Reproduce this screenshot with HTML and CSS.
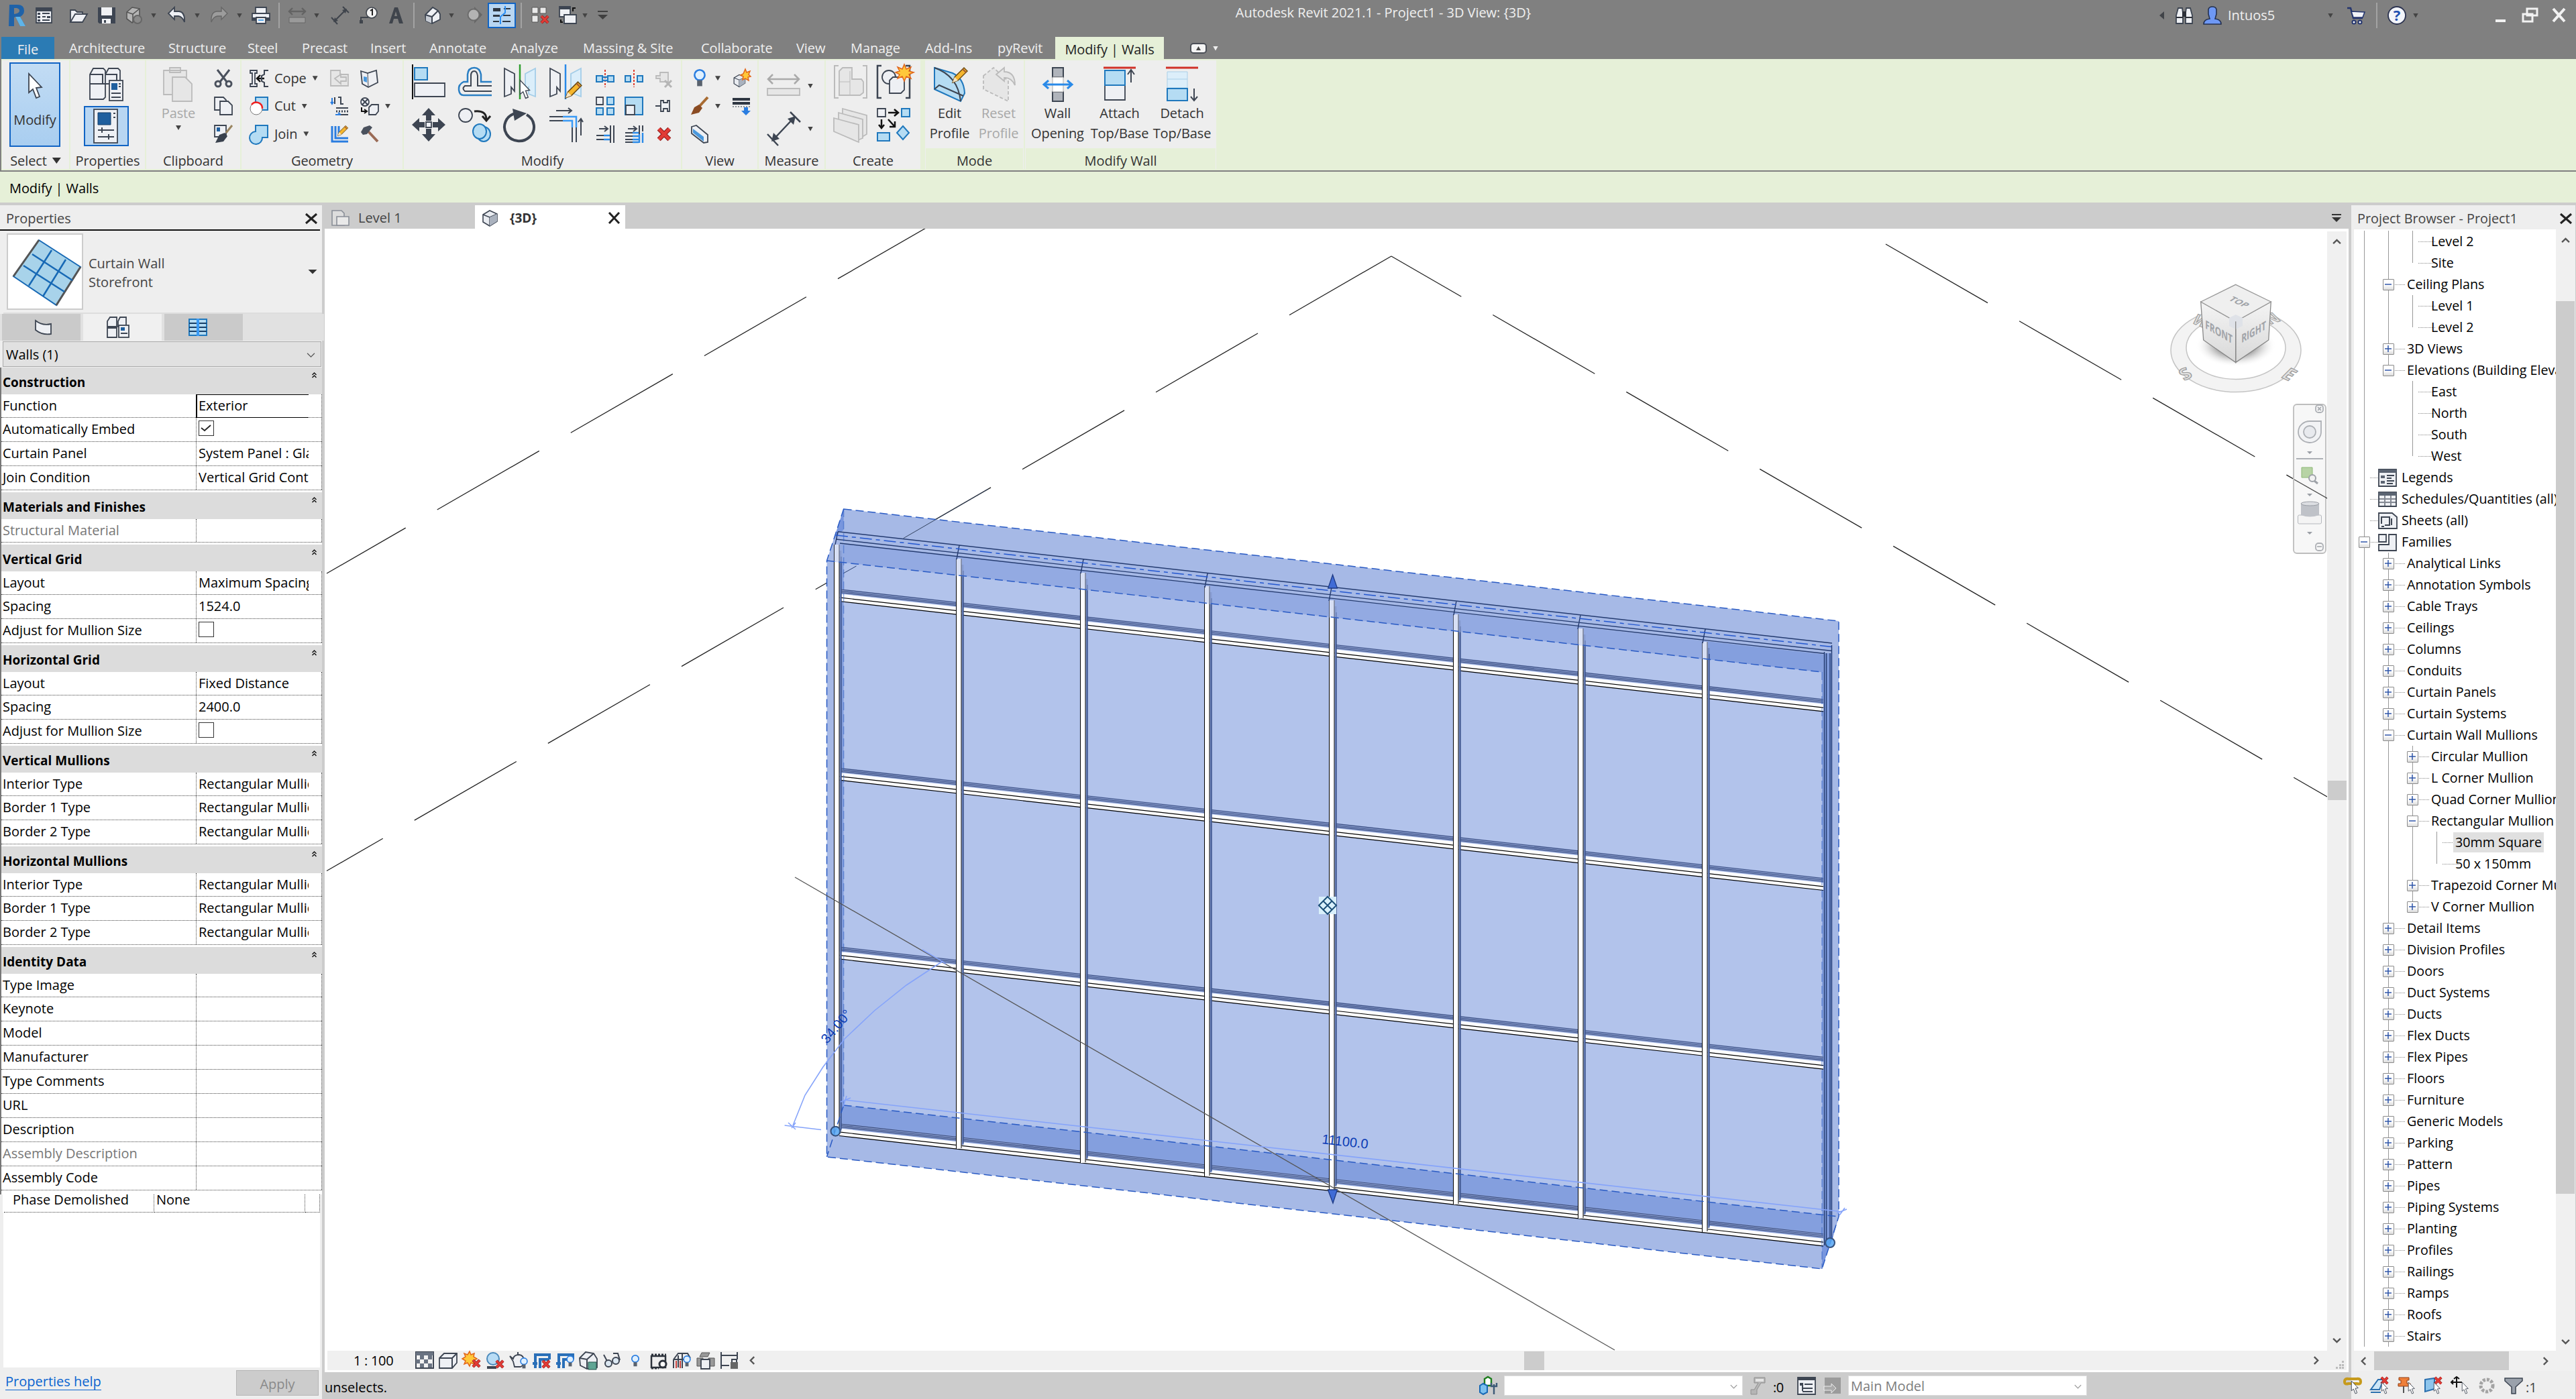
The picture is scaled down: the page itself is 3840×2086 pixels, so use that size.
FILE: index.html
```html
<!DOCTYPE html>
<html lang="en">
<head>
  <meta charset="UTF-8" />
  <title>Autodesk Revit 2021.1 - Project1 - 3D View: {3D}</title>
  <link rel="stylesheet" href="styles.css">
</head>
<body>

<svg class="defs">
  <symbol id="redx" viewBox="0 0 14 14"><path d="M2 2L12 12M12 2L2 12" stroke="#8f1c1c" stroke-width="4.4"/><path d="M2 2L12 12M12 2L2 12" stroke="#e23b35" stroke-width="3"/></symbol>
  <symbol id="cursor" viewBox="0 0 24 40"><path d="M3 2L3 30L9 25L14 38L19 36L14 23L22 22Z" fill="#fff" stroke="#3d4552" stroke-width="1.8"/></symbol>
  <symbol id="pencil" viewBox="0 0 26 26"><path d="M2 24L5 16L19 2L24 7L10 21Z" fill="#f5b62e" stroke="#6b4a12" stroke-width="1.4"/><path d="M2 24L5 16L10 21Z" fill="#f5e3c3"/><path d="M17 4L22 9" stroke="#a65b32" stroke-width="2"/></symbol>
  <symbol id="bulb" viewBox="0 0 14 22"><circle cx="7" cy="7" r="6" fill="#dff0ff" stroke="#2a7de0" stroke-width="2"/><path d="M4 13H10V20H4Z" fill="#59626e"/></symbol>
  <symbol id="cube" viewBox="0 0 28 28"><path d="M4 9L14 3L25 8V19L14 26L4 20Z" fill="#e9ecf1" stroke="#3d4552" stroke-width="1.6"/><path d="M4 9L14 13L25 8M14 13V26" fill="none" stroke="#3d4552" stroke-width="1.4"/><path d="M14 13L25 8V19L14 26Z" fill="#aab2be"/></symbol>
</svg>

<header class="titlebar">
  <div class="qat">
    <svg class="i logo"><path d="M3 1H15Q25 1 25 10Q25 16 19 19L27 33H19L12 19L10 20V33H2Z" fill="#1f62a8"/><path d="M10 6H14Q18 7 18 10Q18 14 10 15Z" fill="#808080"/><path d="M12 19L19 33H27L19 19Z" fill="#5fb4e8"/></svg>
    <svg class="i"><path class="l" d="M3 3H26V25H3Z"/><path d="M3 3H26V8H3ZM5 10H9V13H5ZM5 15H9V18H5ZM5 20H9V23H5ZM19 15H24V18H19Z" fill="#3d4552"/><path class="d" d="M12 11H23M12 16H17M12 21H23"/></svg>
    <svg class="i"><path class="l" d="M2 24V6H9L12 9H20V13"/><path class="l" d="M2 24L9 12H27L20 24Z"/></svg>
    <svg class="i"><path d="M1 2H27V26H3L1 24Z" fill="#3d4552"/><path d="M6 2H22V14H6ZM7 19H20V26H7Z" fill="#f0f1f4"/><path d="M10 21H13V25H10Z" fill="#3d4552"/></svg>
    <svg class="i"><path d="M3 9L11 2L22 4V15L11 25L3 19Z" fill="#b5b5b5" stroke="#555" stroke-width="1.6"/><path d="M3 9L12 12L22 4M12 12V24" fill="none" stroke="#555" stroke-width="1.6"/><circle cx="19" cy="20" r="6" fill="#8a8a8a" stroke="#666" stroke-width="2"/></svg>
    <i class="tri"></i>
    <svg class="i"><path class="l" d="M2 11L11 2V8H18Q27 9 26 24Q23 16 17 15H11V20Z"/></svg>
    <i class="tri"></i>
    <svg class="i"><path d="M26 11L17 2V8H10Q1 9 2 24Q5 16 11 15H17V20Z" fill="#9c9c9c" stroke="#666" stroke-width="1.4"/></svg>
    <i class="tri"></i>
    <svg class="i"><path class="l" d="M6 2H22V11H6Z"/><path class="l" d="M1 11H27V21H1Z"/><path d="M1 17H27V21H1Z" fill="#3d4552"/><path class="l" d="M7 17H21V26H7Z"/><path d="M10 20H18V22H10Z" fill="#58a9ea"/></svg>
    <i class="vsep"></i>
    <svg class="i"><path d="M1 8H27M7 3L2 8L7 13M21 3L26 8L21 13" fill="none" stroke="#636363" stroke-width="2.4"/><path d="M2 17H26V25H2Z" fill="#9a9a9a" stroke="#666"/></svg>
    <i class="tri"></i>
    <svg class="i"><path d="M5 23L23 5M1 17L10 27M18 1L27 10" stroke="#3f444c" stroke-width="2"/><path d="M4 24L6 17L11 22ZM24 4L17 6L22 11Z" fill="#3f444c"/></svg>
    <svg class="i"><path d="M3 25V17H14" fill="none" stroke="#3f444c" stroke-width="2"/><path d="M1 21H6V26H1Z" fill="#3f444c"/><circle cx="19" cy="10" r="8" fill="#f4f4f4" stroke="#3f444c" stroke-width="1.6"/><path d="M17 7L20 5V14" fill="none" stroke="#222" stroke-width="2"/></svg>
    <svg class="i"><path d="M4 26L12 2H17L25 26H19L17 19H11L9 26ZM12 15H16L14 8Z" fill="#3f444c"/></svg>
    <i class="vsep"></i>
    <svg class="i"><path class="l" d="M3 13L14 2L22 7L25 12V20L13 26L4 22Z"/><path d="M4 13L13 17V26L4 22Z" fill="#c7ccd4"/><path class="d" d="M3 13L13 16L22 7M13 16V26"/></svg>
    <i class="tri"></i>
    <svg class="i"><path d="M14 1L26 13L14 26Z" fill="#666"/><circle cx="13" cy="13" r="8.5" fill="#b3b3b3" stroke="#6c6c6c" stroke-width="2"/></svg>
    <span class="active-tool"><svg class="i"><path d="M1 3H12V8H1ZM1 13H11V16H1ZM1 22H10V24H1Z" fill="#2f3742"/><path d="M17 4H27M16 14H27M15 23H27" stroke="#2f3742" stroke-width="2"/><path d="M19 0V10L12 16V27" fill="none" stroke="#2b8ff5" stroke-width="2"/></svg></span>
    <i class="vsep"></i>
    <svg class="i"><path d="M2 2H11V11H2ZM14 2H23V11H14ZM2 14H11V24H2Z" fill="#e8e8e8" stroke="#555"/><use href="#redx" x="14" y="13" width="14" height="14"/></svg>
    <svg class="i"><path class="l" d="M2 1H18V16H2Z"/><path d="M2 1H18V5H2Z" fill="#3d4552"/><path class="l" d="M9 13H27V26H9Z"/><path d="M22 8V3H26M4 20V24H7" fill="none" stroke="#111" stroke-width="2"/></svg>
    <i class="tri"></i>
    <svg class="i"><path d="M3 8H18" stroke="#3f3f3f" stroke-width="2"/><path d="M3 13H18L10.500 20Z" fill="#3f3f3f"/></svg>
  </div>
  <div class="title">Autodesk Revit 2021.1 - Project1 - 3D View: {3D}</div>
  <div class="account">
    <svg class="i"><path d="M7 8V20L0 14Z" fill="#404348"/></svg>
    <svg class="i"><path class="l" d="M5 3H11L12 10V26H2V14ZM17 3H23L26 14V26H16V10Z"/><path d="M11 8H17V16H11ZM2 16H12V18H2ZM16 16H26V18H16Z" fill="#2c3038"/></svg>
    <svg class="i"><path d="M1 27Q1 20 10 19L8 12V5Q9 1 14 1Q19 1 20 5V12L18 19Q27 20 27 27Z" fill="#6e98f5" stroke="#23304f" stroke-width="1.6"/></svg>
    <span>Intuos5</span>
    <i class="tri"></i>
    <svg class="i"><path d="M1 3H6L10 18H24" fill="none" stroke="#24356e" stroke-width="2.4"/><path d="M7 8L27 9L24 17H10Z" fill="#f2f3f8" stroke="#24356e" stroke-width="1.6"/><circle cx="11" cy="24" r="2.500" fill="#fff" stroke="#24356e" stroke-width="2"/><circle cx="20" cy="24" r="2.500" fill="#fff" stroke="#24356e" stroke-width="2"/></svg>
    <i class="vsep"></i>
    <svg class="i"><circle cx="14" cy="14" r="13" fill="#f3f5fa" stroke="#2c3350" stroke-width="1.8"/><text x="14" y="22" class="qmark">?</text></svg>
    <i class="tri"></i>
    <svg class="i"><path d="M2 20H17V24H2Z" fill="#f2f2f2"/></svg>
    <svg class="i"><path d="M9 4H24V14H9ZM3 12H17V23H3Z" fill="#808080" stroke="#f2f2f2" stroke-width="3"/></svg>
    <svg class="i"><path d="M3 4L20 23M20 4L3 23" stroke="#f2f2f2" stroke-width="4"/></svg>
  </div>
</header>

<nav class="tabs">
  <a class="file">File</a><a>Architecture</a><a>Structure</a><a>Steel</a><a>Precast</a><a>Insert</a><a>Annotate</a><a>Analyze</a><a>Massing &amp; Site</a><a>Collaborate</a><a>View</a><a>Manage</a><a>Add-Ins</a><a>pyRevit</a><a class="current">Modify | Walls</a>
  <svg class="i toggle"><rect x="1" y="7" width="23" height="14" rx="4" fill="#f4f4f4" stroke="#4b4f57" stroke-width="2"/><path d="M12.500 11L16 17H9Z" fill="#444"/></svg>
  <i class="tri light"></i>
</nav>

<section class="ribbon">
  <div class="group g-select">
    <div class="body"><div class="bigbtn on"><svg class="cur"><use href="#cursor"/></svg>Modify</div></div>
    <div class="label">Select <i class="tri big"></i></div>
  </div>

  <div class="group g-props">
    <div class="body">
      <svg class="n"><path class="l" d="M2 12L7 3H22L25 6V26H2ZM25 12L30 3H44L47 6V26H25ZM2 26H25V46L22 49H2Z"/><path class="d" d="M2 12H21V26M25 12H42V26"/><rect class="l" x="31" y="21" width="20" height="30"/><path d="M34 25H43V35H34Z" fill="#1f5f9e"/><path class="d" d="M45 26H48M45 30H48M34 40H48M34 46H48"/></svg>
      <span class="active-tool wide"><svg class="n"><rect class="l" x="8" y="1" width="35" height="50"/><path d="M14 6H33V24H14Z" fill="#1f5f9e" stroke="#173f68"/><path class="d" d="M37 7H40M37 13H40M14 32H38M20 28V36M14 42H38M30 38V46"/></svg></span>
    </div>
    <div class="label">Properties</div>
  </div>

  <div class="group g-clip">
    <div class="body">
      <div class="bigbtn off"><svg class="n"><path class="gy" d="M4 6H38V42H4ZM13 2H29V9H13Z"/><path class="gy" d="M17 16H36L46 26V52H17Z"/></svg>Paste<i class="tri"></i></div>
      <div class="smalls">
        <svg class="i"><path d="M5 1L19 19M23 1L9 19" stroke="#4a515d" stroke-width="3"/><circle class="d2" cx="6" cy="22" r="4"/><circle class="d2" cx="22" cy="22" r="4"/></svg>
        <svg class="i"><path class="l" d="M1 1H14L18 5V20H1Z"/><path class="l" d="M9 7H21L27 13V27H9Z"/></svg>
        <svg class="i"><path class="l" d="M1 1H18V18H1Z"/><path d="M4 4H9V10H4Z" fill="#1f5f9e"/><path d="M27 1L18 12" stroke="#9a8560" stroke-width="3"/><path d="M2 27L8 15L16 12L20 17L14 25Z" fill="#39414d"/></svg>
      </div>
    </div>
    <div class="label">Clipboard</div>
  </div>

  <div class="group g-geo">
    <div class="body">
      <div class="smalls texts">
        <div><svg class="i"><path class="l" d="M1 2H11V6H8V22H11V26H1V22H4V6H1Z"/><path d="M12 14H22M16 9L11 14L16 19" fill="none" stroke="#111" stroke-width="2.400"/><path class="d" d="M28 2H22V8L18 10V18L22 20V26H28"/></svg>Cope<i class="tri"></i></div>
        <div><svg class="i"><path class="b" d="M9 1H27V20H9Z"/><circle cx="10" cy="18" r="9" fill="#fff" stroke="#777"/><path d="M3 12A9 9 0 0 1 19 18" fill="none" stroke="#f02020" stroke-width="2.400"/></svg>Cut<i class="tri"></i></div>
        <div><svg class="i"><path class="b" d="M9 1H27V19H19A9.500 9.500 0 1 1 9 10Z"/></svg>Join<i class="tri"></i></div>
      </div>
      <div class="smalls">
        <svg class="i"><path class="gy" d="M1 2H15V8H27V25H1Z"/><path class="gy" d="M7 14L16 8V12H24V18H16V22Z"/></svg>
        <svg class="i"><path class="d" d="M7 1V11M12 1H16V11H20M9 17H27M9 27H27"/><path d="M9 22H27" stroke="#3d4552" stroke-width="3" stroke-dasharray="2"/><path d="M3 2V10M1 8L3 11L5 8M8 27H15M12 24L16 27" fill="none" stroke="#2a7de0" stroke-width="2"/></svg>
        <svg class="i"><path d="M3 2V25H27M8 2V20H27M13 2V15" fill="none" stroke="#2a7de0" stroke-width="3"/><use href="#pencil" x="10" y="0" width="18" height="18"/></svg>
      </div>
      <div class="smalls">
        <svg class="i"><path class="l" d="M1 3L11 6L24 2L26 20L12 27L3 22Z"/><path d="M11 6L12 27" stroke="#3d4552"/><path d="M5 11L10 12V20L5 18Z" fill="#4a98dc"/></svg>
        <div><svg class="i"><circle class="l" cx="7" cy="8" r="6"/><path class="d" d="M3 4L11 12M11 4L3 12"/><path class="l" d="M13 16L17 12H27V22L23 27H13Z"/><path d="M2 16V22H9M6 19L10 22L6 25" fill="none" stroke="#111" stroke-width="2"/></svg><i class="tri"></i></div>
        <svg class="i"><path d="M11 9L26 25" stroke="#9a6a55" stroke-width="4"/><path d="M1 11L5 4L14 1L18 4L10 14L4 15Z" fill="#4a515d"/></svg>
      </div>
    </div>
    <div class="label">Geometry</div>
  </div>

  <div class="group g-modify">
    <div class="body">
      <div class="bigs">
        <svg class="n"><path d="M2 0V52" stroke="#111" stroke-width="2"/><path class="b" d="M5 5H24V23H5Z"/><path class="l" d="M5 28H50V48H5Z"/></svg>
        <svg class="n"><path class="b2" d="M52 26H36V15Q34 5 26 5Q17 5 16 15V26H10Q2 30 3 38Q4 46 10 46H52"/><path class="d" d="M52 32H31V17Q30 10 26 10Q21 10 21 17V32H12Q7 36 12 40H52"/></svg>
        <svg class="n"><path class="l" d="M3 6L18 14V40L13 34V44L3 48Z"/><path class="pb" d="M49 6L34 14V40L39 34V44L49 48Z"/><path d="M26 0V52" stroke="#2f9e2f" stroke-width="2.500"/><use href="#cursor" x="24" y="22" width="18" height="30"/></svg>
        <svg class="n"><path class="l" d="M3 6L18 14V40L13 34V44L3 48Z"/><path class="pb" d="M49 6L34 14V40L39 34V44L49 48Z"/><path d="M26 0V52" stroke="#2a8ae8" stroke-width="2.500"/><use href="#pencil" x="24" y="24" width="28" height="28"/></svg>
        <svg class="n"><path d="M26 1L36 12H30V20H22V12H16ZM26 51L36 40H30V32H22V40H16ZM1 26L12 16V22H20V30H12V36ZM51 26L40 16V22H32V30H40V36Z" fill="#3d4552"/><path class="l" d="M22 22H30V30H22Z"/></svg>
        <svg class="n"><circle class="l" cx="13" cy="12" r="10"/><path d="M26 6Q44 4 44 18M38 13L44 20L50 13" fill="none" stroke="#222" stroke-width="3"/><ellipse class="b" cx="40" cy="40" rx="10" ry="11"/><ellipse class="b" cx="34" cy="36" rx="10" ry="11"/></svg>
        <svg class="n"><path d="M36 11A22 21 0 1 1 19 9" fill="none" stroke="#3d4552" stroke-width="4"/><path d="M15 2L36 9L18 20Z" fill="#3d4552"/></svg>
        <svg class="n"><path class="d" d="M2 14H22M2 20H22M36 30V52M42 30V52M12 5H34M30 1L35 5L30 9M49 42V18M45 22L49 17L52 22"/><path d="M22 14H42V30M22 20H36V30" fill="none" stroke="#3a9af5" stroke-width="2.500"/></svg>
      </div>
      <div class="smalls three">
        <svg class="i"><path class="b" d="M1 10H10V19H1ZM18 10H27V19H18Z"/><path d="M14 1V27" stroke="#e03c2c" stroke-width="2" stroke-dasharray="3 2"/><path class="b2" d="M10 12H18M10 17H18"/></svg>
        <svg class="i"><path class="b" d="M1 10H9V19H1ZM19 10H27V19H19Z"/><path d="M14 1V27" stroke="#e03c2c" stroke-width="2" stroke-dasharray="3 2"/></svg>
        <svg class="i"><path class="gy" d="M2 10H8V5H20V19H8V14H2Z"/><path d="M15 17L25 27M25 17L15 27" stroke="#b5b5b5" stroke-width="3"/></svg>
        <svg class="i"><path class="l" d="M1 1H11V12H1Z"/><path class="b" d="M17 1H27V12H17ZM1 17H11V27H1ZM17 17H27V27H17Z"/></svg>
        <svg class="i"><path class="b" d="M1 1H27V27H1Z"/><path class="l" d="M2 13H15V27H2Z"/></svg>
        <svg class="i"><path class="l" d="M9 6H13V9H19V6H22V22H19V18H13V22H9Z"/><path class="d" d="M1 14H9"/></svg>
        <svg class="i"><path class="d" d="M5 6H17M13 2L18 6L13 10M22 1V27M27 1V27M1 16H12M1 22H12"/><path d="M12 16H21M12 22H21" stroke="#2a8ae8" stroke-width="2.400"/></svg>
        <svg class="i"><path class="d" d="M5 6H17M13 2L18 6L13 10M1 12H12M1 17H12M1 22H12M1 26H12M22 1V14M27 1V10"/><path d="M12 12H21M12 17H21M12 22H21M12 26H21M22 14V27M27 12V27" stroke="#2a8ae8" stroke-width="2.400"/></svg>
        <svg class="i"><use href="#redx" x="3" y="3" width="22" height="22"/></svg>
      </div>
    </div>
    <div class="label">Modify</div>
  </div>

  <div class="group g-view">
    <div class="body">
      <div class="smalls">
        <div><svg class="i"><use href="#bulb" x="5" y="0" width="18" height="28"/></svg><i class="tri"></i></div>
        <div><svg class="i"><path d="M26 1L14 14" stroke="#a86b32" stroke-width="4"/><path d="M1 27L6 16L13 12L18 17L13 24Z" fill="#8a4b22"/></svg><i class="tri"></i></div>
        <svg class="i"><path class="l" d="M2 3L9 1L26 15V26L20 27L2 13Z"/><path d="M4 6L20 18V25L4 12Z" fill="#4a98dc"/></svg>
      </div>
      <div class="smalls">
        <svg class="i"><use href="#cube" x="0" y="6" width="22" height="22"/><path class="star" d="M20 0L22 5L27 3L25 8L28 11L24 12L25 17L20 14L16 16L17 11L13 9L17 7Z"/></svg>
        <svg class="i"><path d="M1 4H27M1 10H27" stroke="#2f3742" stroke-width="4"/><path d="M1 15H27" stroke="#2f3742" stroke-dasharray="2"/><path d="M18 16H24V21H28L21 28L14 21H18Z" fill="#2a7de0"/></svg>
      </div>
    </div>
    <div class="label">View</div>
  </div>

  <div class="group g-measure">
    <div class="body">
      <svg class="n"><path d="M3 16H49M10 9L3 16L10 23M42 9L49 16L42 23" fill="none" stroke="#aaa" stroke-width="2.500"/><path class="gy" d="M2 30H50V40H2Z"/></svg><i class="tri"></i>
      <svg class="n"><path d="M10 43L42 9M2 34L18 51M36 1L51 16" fill="none" stroke="#3d4552" stroke-width="2.500"/><path d="M8 45L11 32L20 41ZM44 7L41 20L32 11Z" fill="#3d4552"/></svg><i class="tri"></i>
    </div>
    <div class="label">Measure</div>
  </div>

  <div class="group g-create">
    <div class="body">
      <svg class="n"><path d="M8 2H2V50H8M44 2H50V50H44" fill="none" stroke="#bbb" stroke-width="2"/><path class="gy" d="M9 10L14 5H28V22H42L45 26V42L40 46H9Z"/><path d="M9 26H25M25 10V46" stroke="#bbb"/></svg>
      <svg class="n"><path d="M8 2H2V50H8M44 2H50V50H44" fill="none" stroke="#3d4552" stroke-width="2.500"/><circle class="l" cx="19" cy="19" r="10"/><path class="l" d="M20 24L25 19H42V38L37 43H20Z"/><path class="star" d="M42 0L45 7L52 4L49 10L56 12L49 15L52 21L45 18L42 25L39 18L32 21L35 15L29 12L35 10L32 4L39 7Z"/></svg>
      <svg class="n"><path class="gy" d="M14 2L50 12V40L40 46L14 26Z"/><path class="gy" d="M8 8L44 18V46L34 50L8 34Z"/><path class="gy" d="M1 16L38 26V52L1 36Z"/></svg>
      <svg class="n"><path class="l" d="M2 2H14V14H2Z"/><path class="b" d="M38 2H50V14H38ZM2 38H20V50H2ZM40 28L49 38L40 48L31 38Z"/><path d="M18 8H32M27 3L33 8L27 13M8 18V30M4 26L8 31L12 26M18 18L28 29M28 21V29H20" fill="none" stroke="#111" stroke-width="2.500"/></svg>
    </div>
    <div class="label">Create</div>
  </div>

  <div class="group g-mode ctx">
    <div class="body">
      <div class="bigbtn"><svg class="n"><path class="b" d="M3 2L30 10Q47 18 48 40L42 52L3 34Z"/><path class="d" d="M3 2Q38 14 42 52M3 34L10 28L46 44"/><use href="#pencil" x="28" y="0" width="26" height="26"/></svg>Edit<br>Profile</div>
      <div class="bigbtn off"><svg class="n"><path class="gy" stroke-dasharray="5 3" d="M3 14L18 2L40 22V52L3 34Z"/><path class="gy" d="M22 12L34 2V8Q50 8 50 28Q44 16 34 17V22Z"/></svg>Reset<br>Profile</div>
    </div>
    <div class="label">Mode</div>
  </div>

  <div class="group g-wall ctx">
    <div class="body">
      <div class="bigbtn"><svg class="n"><path d="M18 2H34V16H18ZM18 38H34V52H18Z" fill="#b0b4bb" stroke="#3d4552" stroke-width="2"/><path d="M18 16H34V38H18Z" fill="#fff" stroke="#aaa"/><path d="M6 27H46M12 21L5 27L12 33M40 21L47 27L40 33" fill="none" stroke="#2a8ae8" stroke-width="3"/></svg>Wall<br>Opening</div>
      <div class="bigbtn"><svg class="n"><path d="M2 2H50" stroke="#d03028" stroke-width="3"/><path class="l" d="M4 6H34V50H4Z"/><path class="b" d="M4 6H34V28H4Z"/><path class="d" d="M43 24V6M38 12L43 5L48 12"/></svg>Attach<br>Top/Base</div>
      <div class="bigbtn"><svg class="n"><path d="M2 2H50" stroke="#d03028" stroke-width="3"/><path d="M4 8H34V32H4ZM4 19H34" fill="#dceefa" stroke="#a9cfe8"/><path class="b" d="M4 33H34V51H4Z"/><path class="d" d="M44 33V50M39 45L44 51L49 45"/></svg>Detach<br>Top/Base</div>
    </div>
    <div class="label">Modify Wall</div>
  </div>
</section>

<div class="options">Modify | Walls</div>

<main>
  <aside class="properties">
    <div class="pane-title">Properties<svg class="x"><path d="M2 3L18 17M18 3L2 17"/></svg></div>
    <div class="type">
      <div class="thumb"><svg width="106" height="106" viewBox="0 0 106 106"><path d="M44 6L106 46L70 103L6 60Z" fill="#a8d3ea" stroke="#1769b5" stroke-width="2"/><path d="M6 60L44 6M70 103L106 46" stroke="#555" stroke-width="3"/><path d="M34 27L94 66M21 44L82 83M63 21L29 74M84 35L50 90" stroke="#1769b5" stroke-width="2.500"/></svg></div>
      <div class="type-name">Curtain Wall<br>Storefront</div>
      <i class="tri wide"></i>
    </div>
    <div class="ptabs">
      <span><svg class="i"><path class="l" d="M2 4Q12 12 25 9V24Q12 26 2 18Z"/></svg></span>
      <span class="sel"><svg width="34" height="34"><path class="l" d="M1 8L5 2H15V16H1ZM17 8L20 2H29V16H17ZM1 18H15V32H1Z"/><rect class="l" x="18" y="14" width="15" height="18"/><path d="M21 17H27V22H21Z" fill="#1f5f9e"/><path class="d" d="M21 26H31"/></svg></span>
      <span><svg class="i"><path class="b" d="M1 2H27V26H1Z"/><path d="M1 8H27M1 14H27M1 20H27" stroke="#173f68" stroke-width="2"/><path d="M14 1V27" stroke="#3a9af5" stroke-width="4"/></svg></span>
    </div>
    <div class="filter">Walls (1)<svg class="chev" viewBox="0 0 14 10"><path d="M1 2L7 8L13 2"/></svg></div>
    <div class="grid" id="props"></div>
    <div class="phase"><span>Phase Demolished</span><span>None</span><span></span></div>
    <div class="blank"></div>
    <div class="help"><a>Properties help</a><button>Apply</button></div>
  </aside>

  <section class="view">
    <div class="view-tabs">
      <div class="vtab"><svg class="i"><path d="M2 3H16L20 7V25H2Z" fill="#ddd" stroke="#8a8f98" stroke-width="1.600"/><path d="M9 12H27V25H9Z" fill="#e9e9e9" stroke="#8a8f98" stroke-width="1.600"/></svg>Level 1</div>
      <div class="vtab front"><svg class="i"><use href="#cube"/></svg>{3D}<svg class="x"><path d="M2 2L17 18M17 2L2 18"/></svg></div>
      <svg class="i more"><path d="M4 9H18" stroke="#333" stroke-width="2"/><path d="M4 13H18L11 20Z" fill="#333"/></svg>
    </div>
    <div class="stage">
      <svg class="canvas" viewBox="484 341 2985 1673">
        <defs>
          <g id="rail">
            <path d="M1253 878L2718 1042V1049L1253 885Z" fill="#8fa3d3"/>
            <path class="hatch" d="M1253 879L2718 1043M1253 881.300L2718 1045.300M1253 883.500L2718 1047.500"/>
            <path d="M1251 885.500L2718 1049.800V1060.600L1251 896.300Z" fill="#fff"/>
            <path class="ink" d="M1251 890.900L2718 1055.200M1251 896.500L2718 1060.800"/>
          </g>
          <g id="post">
            <path d="M0 0H8V880H0Z" fill="#fff"/>
            <path d="M8 9H11V874H8Z" fill="#6f87c2"/>
            <path class="ink crisp" d="M0 0V880M7.500 0V879"/>
            <path class="navy crisp" d="M10.500 18V872"/>
          </g>
        </defs>

        <!-- reference planes -->
        <g class="plane">
          <path d="M1401 328L487 855"/>
          <path d="M2074 382L1321 817" />
          <path stroke-dasharray="none" d="M1276.500 844L1215.700 878.700"/>
          <path d="M1168 906L487 1298.500"/>
          <path stroke-dashoffset="55" d="M2074 382L3469 1188"/>
          <path d="M2811 364L3469 743"/>
        </g>

        <!-- selected wall -->
        <path d="M1257.600 759L2741 926V1814L2716 1892L1232.500 1725V836Z" fill="#a6b9e6"/>
        <path d="M1257.600 759V790L1244 802L1232.500 836ZM2741 1814L2716 1892V1857L2728 1846Z" fill="#7896de"/>
        <path d="M1253 810L2718 974.500V1857L1253 1693Z" fill="#b2c3eb"/>
        <path d="M1253 810L2718 974.500V1002.500L1253 838Z" fill="#849fde"/>
        <path d="M1253 1647.500L2718 1811.500V1857L1253 1693Z" fill="#849fde"/>
        <path d="M1251 810H1257.600V1690H1251ZM2716 974H2741V1814L2731 1850H2716Z" fill="#849fde"/>
        <path d="M2731 940L2741 926V1814L2731 1840Z" fill="#a6b9e6"/>
        <path d="M1473.400 729L1346.600 802.700" stroke="#33435f" stroke-width="1"/>
        <path d="M1276.500 844L1257 855" stroke="#2b4170" stroke-width="1"/>
        <use href="#rail"/><use href="#rail" y="266.700"/><use href="#rail" y="533.400"/><use href="#rail" y="797"/>
        <use href="#post" x="1243.500" y="812"/><use href="#post" x="1425.500" y="833"/><use href="#post" x="1610.500" y="854"/><use href="#post" x="1795.500" y="874"/>
        <use href="#post" x="1981.500" y="895"/><use href="#post" x="2166.500" y="916"/><use href="#post" x="2352.500" y="937"/><use href="#post" x="2537.500" y="957"/>
        <path d="M1243.500 804L2546 950V984L1243.500 838Z" fill="#a6b9e6" opacity=".45"/>
        <path d="M1250 793L2729 959V977L1250 810Z" fill="#a6b9e6"/>
        <path class="navy" d="M1249 792.700L2731 959M1246 804L2731 970.500M1252 810L2720 974.500M1249 793L1245 812M1430 813L1426 834M1615 834L1611 855M1800 855L1796 876M1985 876L1981 896M2171 896L2167 917M2356 917L2352 938M2542 938L2538 959"/>
        <path class="axis" d="M1246 798L2731 964.500"/>
        <path d="M2719 974H2730V1850H2719Z" fill="#7e9adb"/>
        <path class="navy" d="M2719.500 972V1857M2722.500 974V1857M2728 974V1850M2730.500 962V1846"/>
        <path class="edge" d="M1257.600 759L2741 926V1814L2716 1892L1232.500 1725V836ZM1232.500 836L2716 1002M1257.600 1648L2741 1814M1257.600 1648L1232.500 1725"/>
        <path class="edge faint" d="M1257.600 759V1648M2716 1002V1892"/>

        <!-- reference line, dimensions -->
        <path d="M1185 1308L2407 2013" stroke="#555" stroke-width="1.300"/>
        <path class="dim" d="M1375 1416L1410 1437M1405.500 1433L1351 1469L1303.500 1507L1259 1549L1227 1590.700L1200 1633L1182 1678M1169.600 1678L1224 1684.500M1175 1674L1186 1684M1186 1674L1180 1682M1259 1640L2746 1806.700M1253 1643L1268 1637M1257 1650L1262 1634M2738 1809L2753 1803M2742 1812L2750 1801"/>
        <text class="dimtext" transform="translate(1970 1705) rotate(6.400)">11100.0</text>
        <text class="dimtext" transform="translate(1233 1557) rotate(-50)">34.00°</text>
        <path class="grip" d="M1986.600 857L1993.500 877H1979.700ZM1979.500 1774H1993.500L1987 1794Z"/>
        <circle class="node" cx="1245.500" cy="1686.700" r="7"/>
        <circle class="node" cx="2728" cy="1853" r="7"/>
        <path d="M1966 1337H1992V1363H1966Z" fill="#d9f0fb"/>
        <path d="M1979 1337L1992 1350L1979 1363L1966 1350ZM1972.500 1343.500L1985.500 1356.500M1985.500 1343.500L1972.500 1356.500" fill="none" stroke="#1c4f78" stroke-width="2"/>

        <!-- view cube -->
        <radialGradient id="shade"><stop offset=".5" stop-color="#aaa"/><stop offset="1" stop-color="#fff" stop-opacity="0"/></radialGradient>
        <linearGradient id="face" x2="0" y2="1"><stop stop-color="#f4f4f4"/><stop offset="1" stop-color="#d8d8d8"/></linearGradient>
        <path d="M3236 522A97 62.500 0 1 0 3430 522A97 62.500 0 1 0 3236 522ZM3259 518.500A74 47 0 1 1 3407 518.500A74 47 0 1 1 3259 518.500Z" fill="#f3f3f3" stroke="#c4c4c4" stroke-width="1.500" fill-rule="evenodd"/>
        <ellipse cx="3333" cy="515" rx="60" ry="32" fill="url(#shade)"/>
        <g class="compass">
          <text transform="matrix(.85 .35 -.6 .7 3266 481)">W</text>
          <text transform="matrix(.85 -.3 .7 .7 3384 484)">N</text>
          <text transform="matrix(1 -.5 .6 .8 3256 568)">S</text>
          <text transform="matrix(.95 .45 -.8 .8 3399 562)">E</text>
        </g>
        <path d="M3280.700 450L3332.700 479.300V540.400L3284.700 507ZM3385.300 450L3332.700 479.300V540.400L3381.700 507Z" fill="url(#face)" stroke="#888" stroke-width="1.300"/>
        <path d="M3332.700 424.300L3385.300 450L3332.700 479.300L3280.700 450Z" fill="#efefef" stroke="#999" stroke-width="1.300"/>
        <path d="M3332.700 469L3343 474V486L3332.700 491L3323 486V474Z" fill="#dfe2e8"/>
        <path d="M3332.700 479.300V540.400" stroke="#888" stroke-width="1.300"/>
        <g class="cubetext">
          <text transform="matrix(.85 .4 -.75 .5 3334 453)">TOP</text>
          <text transform="matrix(.8 .46 0 1.150 3307.500 501)">FRONT</text>
          <text transform="matrix(.8 -.46 0 1.150 3359.500 501)">RIGHT</text>
        </g>

        <!-- navigation bar -->
        <rect x="3419" y="603" width="48" height="222" rx="5" fill="#f7f7f7" stroke="#bdbdbd" stroke-width="1.800"/>
        <g fill="none" stroke="#adb0b5" stroke-width="1.800">
          <rect x="3452" y="604" width="11" height="11" rx="4"/><path d="M3455 607L3460 612M3460 607L3455 612"/>
          <path d="M3443 628H3460V645A17 16 0 1 1 3443 628Z" fill="#f2f3f5"/><circle cx="3443" cy="644" r="9" fill="#e8eaee"/>
          <rect x="3452" y="810" width="11" height="11" rx="4"/><path d="M3454 815H3461"/>
          <path d="M3423 684H3463"/>
        </g>
        <path d="M3439 673H3447L3443 677ZM3439 736H3447L3443 740ZM3439 793H3447L3443 797Z" fill="#9a9ea5"/>
        <path d="M3431 697H3447V712H3431Z" fill="#b7d3a5" stroke="#8db777"/>
        <circle cx="3447" cy="713" r="5" fill="#f2f2f2" stroke="#9ea2a8" stroke-width="2"/><path d="M3450 717L3455 721" stroke="#9ea2a8" stroke-width="3"/>
        <rect x="3425.500" y="768" width="35" height="13" rx="2" fill="#f4f4f4" stroke="#b5b8bd"/>
        <path d="M3430 751V768Q3443 773 3457 768V751Z" fill="#bfc2c8"/><ellipse cx="3443.500" cy="751" rx="13.500" ry="3" fill="#dcdee2" stroke="#9a9ea5"/>
        <path d="M3420 715L3469 743" stroke="#444" stroke-width="1.200"/>
      </svg>
      <div class="vscroll"><svg class="chev" viewBox="0 0 14 10"><path d="M1 8L7 2L13 8"/></svg><i></i><svg class="chev" viewBox="0 0 14 10"><path d="M1 2L7 8L13 2"/></svg></div>
    </div>
    <div class="view-bar">
      <span class="scale">1 : 100</span>
      <div class="vicons">
        <svg class="i"><path d="M1 1H27V25H1Z" fill="#f2f2f2" stroke="#3d4552" stroke-width="2"/><path d="M1 1H27V6H1ZM7 6H13V12H7ZM19 6H25V12H19ZM1 12H7V18H1ZM13 12H19V18H13ZM7 18H13V24H7ZM19 18H25V24H19Z" fill="#6a7382"/></svg>
        <svg class="i"><path class="l" d="M1 10L8 3H27V17L20 25H1Z"/><path class="d" d="M1 10H20V25M20 10L27 3"/></svg>
        <svg class="i"><path class="star" d="M11 0L13 5L18 3L17 8L22 11L17 14L18 19L13 17L11 22L8 17L3 19L5 14L0 11L5 8L3 3L8 5Z"/><use href="#redx" x="14" y="11" width="14" height="14"/></svg>
        <svg class="i"><circle cx="11" cy="11" r="9" fill="#b8dcf5" stroke="#4a89bb" stroke-width="2"/><path d="M2 24H16" stroke="#3d4552" stroke-width="4"/><use href="#redx" x="14" y="12" width="14" height="14"/></svg>
        <svg class="i"><path class="l" d="M1 7L6 11Q7 5 15 5Q22 6 22 14Q21 22 17 23H8L6 15Z"/><path class="d" d="M13 5V1"/><use href="#bulb" x="16" y="9" width="12" height="18"/></svg>
        <svg class="i"><path d="M5 25V5H26V12M12 25V12H26M1 18H8" fill="none" stroke="#2a6fb8" stroke-width="4"/><use href="#redx" x="14" y="12" width="14" height="14"/></svg>
        <svg class="i"><path d="M5 25V5H26V12M12 25V12H20M1 18H8" fill="none" stroke="#2a6fb8" stroke-width="4"/><use href="#bulb" x="16" y="6" width="12" height="18"/></svg>
        <svg class="i"><path class="l" d="M1 10L10 1L22 3L27 11V24L12 26L2 21Z"/><path class="d" d="M1 10L12 12L22 3M12 12V26"/><path d="M14 16H26V27H14Z" fill="#5fa594" stroke="#23534a"/></svg>
        <svg class="i"><path class="d" d="M2 5L10 20M16 3H23L26 13"/><circle cx="9" cy="18" r="5" fill="#dce8f2" stroke="#3d4552" stroke-width="2"/><circle cx="20" cy="14" r="5" fill="#dce8f2" stroke="#3d4552" stroke-width="2"/></svg>
        <svg class="i"><use href="#bulb" x="7" y="5" width="14" height="19"/></svg>
        <svg class="i"><path d="M3 7H24V24H3Z" fill="#eee" stroke="#2c323b" stroke-width="2.500"/><path d="M3 5H25M3 25H14" stroke="#2c323b" stroke-width="3" stroke-dasharray="3 2"/><circle cx="20" cy="19" r="5" fill="#fff" stroke="#2c323b" stroke-width="3"/></svg>
        <svg class="i"><path class="d" d="M1 12L8 3H22L26 10M1 12V25M8 6V24M14 4V25M2 12H20"/><path d="M5 14V25M11 14V25" stroke="#c8403a" stroke-width="2"/><use href="#bulb" x="15" y="6" width="12" height="18"/></svg>
        <svg class="i"><path d="M8 2H20L17 8H5ZM1 10H10V22H1ZM18 10H27V22H18Z" fill="#999" stroke="#555"/><path class="l" d="M7 12H20V26H7Z"/></svg>
        <svg class="i"><path class="d" d="M2 1V26M26 1V12M2 6H26M2 21H14"/><path d="M16 16H27V26H16Z" fill="#666"/><path class="d" d="M18 16V12H25V16"/></svg>
      </div>
      <svg class="chev side first" viewBox="0 0 10 14"><path d="M8 1L2 7L8 13"/></svg>
      <div class="hscroll"><i></i></div>
      <svg class="chev side" viewBox="0 0 10 14"><path d="M2 1L8 7L2 13"/></svg>
      <svg class="sizer"><path d="M9 0H12V3H9ZM5 5H8V8H5ZM9 5H12V8H9ZM0 9H3V12H0ZM5 9H8V12H5ZM9 9H12V12H9Z"/></svg>
    </div>
  </section>

  <aside class="browser">
    <div class="pane-title">Project Browser - Project1<svg class="x"><path d="M2 3L18 17M18 3L2 17"/></svg></div>
    <div class="tree-wrap">
      <div class="tree" id="tree"></div>
      <div class="vscroll"><svg class="chev" viewBox="0 0 14 10"><path d="M1 8L7 2L13 8"/></svg><i></i><svg class="chev" viewBox="0 0 14 10"><path d="M1 2L7 8L13 2"/></svg></div>
    </div>
    <div class="tree-h"><svg class="chev side" viewBox="0 0 10 14"><path d="M8 1L2 7L8 13"/></svg><i></i><svg class="chev side" viewBox="0 0 10 14"><path d="M2 1L8 7L2 13"/></svg></div>
  </aside>
</main>

<footer class="status">
  <span class="hint">unselects.</span>
  <svg class="i"><path d="M8 4L13 1L18 4V14H8Z" fill="#fff" stroke="#1d7d1d" stroke-width="2.400"/><path d="M1 14L6 11L12 14V24L6 27L1 24Z" fill="#7cc0ee" stroke="#1769b5" stroke-width="2"/><path d="M22 12V27M18 10V15H26V10" fill="none" stroke="#3d5a78" stroke-width="2.400"/></svg>
  <div class="combo"><svg class="chev" viewBox="0 0 14 10"><path d="M1 2L7 8L13 2"/></svg></div>
  <svg class="i"><path d="M8 2H24V10H18L12 20V27H3V20H8L14 10H8Z" fill="#b5b5b5" stroke="#8f8f8f"/><path d="M10 4H22V8H10Z" fill="#e5e5e5"/></svg>
  <span>:0</span>
  <svg class="i"><path class="l" d="M1 2H27V27H1Z"/><path d="M1 2H27V6H1ZM4 10H9V14H4Z" fill="#3d4552"/><path class="d" d="M11 12H23M8 12V22M8 18H23M8 23H23"/></svg>
  <svg class="i"><path d="M2 2H26V26H2Z" fill="#9b9b9b"/><path d="M1 15H12V11L19 18L12 25V21H1Z" fill="#aaa" stroke="#eee"/></svg>
  <div class="combo">Main Model<svg class="chev" viewBox="0 0 14 10"><path d="M1 2L7 8L13 2"/></svg></div>
  <div class="selicons">
    <svg class="i"><path d="M2 8Q2 3 8 4H20Q26 3 26 8Q26 13 20 11H8Q2 13 2 8Z" fill="none" stroke="#c69a1c" stroke-width="4"/><use href="#cursor" x="10" y="6" width="14" height="21"/></svg>
    <svg class="i"><path d="M1 20L12 5H20L14 20ZM1 24H16" fill="#cde6f7" stroke="#2a6fae" stroke-width="2"/><use href="#redx" x="15" y="0" width="13" height="13"/><use href="#cursor" x="15" y="8" width="13" height="19"/></svg>
    <svg class="i"><path d="M3 2H18V6H15V11H20V15H2V11H6V6H3Z" fill="#ee7f3a" stroke="#8f3c12"/><path d="M10 15V25" stroke="#555" stroke-width="2"/><use href="#cursor" x="15" y="8" width="13" height="19"/></svg>
    <svg class="i"><path d="M2 5L16 3V19L2 23Z" fill="#8ec5ec" stroke="#2a6fae" stroke-width="2"/><use href="#redx" x="15" y="0" width="13" height="13"/><use href="#cursor" x="13" y="8" width="13" height="19"/></svg>
    <svg class="i"><path d="M1 9H17M9 1V17M5 4L9 1L13 4M4 6L1 9L4 12" fill="none" stroke="#111" stroke-width="2"/><use href="#cursor" x="15" y="8" width="13" height="19"/></svg>
    <svg class="i"><circle cx="14" cy="14" r="9" fill="none" stroke="#a3a3a3" stroke-width="5" stroke-dasharray="4 2"/></svg>
    <svg class="i"><path d="M1 3H27V7L17 16V26H11V16L1 7Z" fill="#9aa1ab" stroke="#3d4552" stroke-width="1.500"/></svg>
    <span>:1</span>
  </div>
</footer>

<script src="script.js"></script>
</body>
</html>
```
FILE: styles.css
```css
* { box-sizing: border-box; }
body {
  margin: 0;
  width: 3840px;
  height: 2086px;
  overflow: hidden;
  display: flex;
  flex-direction: column;
  background: #ccc;
  color: #000;
  font: 20px/1 "Open Sans", "Noto Sans", sans-serif;
}
svg { display: block; overflow: visible; flex: none; }
.defs { width: 0; height: 0; position: absolute; }
.i { width: 28px; height: 28px; }
.n { width: 52px; height: 53px; }

/* icon paint */
.l { fill: #eef0f4; stroke: #3d4552; stroke-width: 1.8; }
.d { fill: none; stroke: #3d4552; stroke-width: 2; }
.d2 { fill: none; stroke: #4a515d; stroke-width: 3; }
.b { fill: #b5dcf3; stroke: #1f78bd; stroke-width: 2; }
.b2 { fill: none; stroke: #2a7fc4; stroke-width: 2.5; }
.pb { fill: #dbeefa; stroke: #a3cde8; stroke-width: 1.8; }
.gy { fill: #e6e6e6; stroke: #bbb; stroke-width: 1.8; }
.star { fill: #ffc83a; stroke: #e2661a; stroke-width: 1.5; }
.qmark { font-size: 22px; font-weight: 700; text-anchor: middle; fill: #2350b0; }

.tri {
  width: 8px;
  height: 7px;
  background: #444;
  clip-path: polygon(0 0, 100% 0, 50% 100%);
  flex: none;
}
.tri.light { background: #eee; }
.tri.big { width: 13px; height: 9px; background: #333; }
.tri.wide { width: 14px; height: 7px; background: #333; }
.vsep { width: 2px; height: 38px; background: #a3a3a3; }
.chev { width: 13px; height: 9px; }
.chev.side { width: 9px; height: 13px; }
.chev path { fill: none; stroke: #555; stroke-width: 2.6; }
.x { width: 20px; height: 20px; }
.x path { stroke: #222; stroke-width: 3; }

/* title bar */
.titlebar {
  height: 53px;
  background: #808080;
  display: grid;
  grid-template-columns: 1300px 1fr 640px;
  color: #f0f0f0;
}
.qat, .account { display: grid; align-items: center; height: 46px; }
.qat {
  padding-left: 11px;
  grid-template-columns: 40px 52px 42px 41px 39px 24px 41px 23px 40px 22px 40px 14px 39px 25px 42px 41px 40px 15px 38px 24px 34px 49px 15px 41px 36px 20px 20px;
}
.logo { height: 34px; }
.account {
  padding-left: 19px;
  grid-template-columns: 23px 42px 37px 149px 28px 44px 17px 38px 121px 40px 45px 30px;
}
.title { text-align: center; line-height: 38px; padding-right: 376px; letter-spacing: -.05px; }
.active-tool {
  width: 42px;
  height: 38px;
  display: flex;
  align-items: center;
  justify-content: center;
  background: #b8d6f2;
  border: 2px solid #1164c4;
}
.active-tool.wide { width: 67px; height: 60px; }

/* ribbon tabs */
.tabs {
  height: 35px;
  background: #808080;
  color: #f0f0f0;
  display: grid;
  padding-left: 2px;
  grid-template-columns: 101px 148px 118px 81px 102px 88px 121px 108px 176px 142px 81px 111px 108px 86px 201px 34px 10px;
  align-items: center;
  line-height: 38px;
  letter-spacing: -.1px;
}
.file { width: 79px; text-align: center; background: #2b7bb4; height: 35px; }
.current { width: 162px; text-align: center; background: #e6f0d8; color: #222; height: 35px; }

/* ribbon */
.ribbon {
  height: 168px;
  background: #e6f0d8;
  border-left: 2px solid #808080;
  border-bottom: 2px solid #808080;
  padding: 2px 0 2px 1px;
  display: flex;
  gap: 2px;
  color: #333;
  letter-spacing: -.1px;
}
.group { background: #eee; display: flex; flex-direction: column; }
.body { height: 131px; display: flex; }
.label {
  height: 31px;
  display: flex;
  justify-content: center;
  align-items: center;
  gap: 8px;
  padding-top: 6px;
}
.ctx .label { background: #e6f0d8; margin: 0 1px; }
.bigbtn { text-align: center; line-height: 30px; width: 88px; padding-top: 9px; }
.bigbtn svg { margin: 0 auto 2px; }
.bigbtn .tri { margin: 3px auto 0; display: block; }
.off { color: #a8a8a8; }
.smalls {
  display: grid;
  grid-auto-rows: 41.5px;
  padding-top: 6px;
  align-items: center;
  align-content: start;
}
.smalls > div { display: flex; align-items: center; gap: 9px; }
.texts { width: 120px; }
.three { grid-template-columns: 43px 45px 30px; }
.bigs { display: grid; grid-template-columns: repeat(4, 68px); grid-auto-rows: 64px; width: 275px; padding-top: 6px; align-content: start; }
.g-select { width: 100px; }
.g-select .body { padding: 3px 0 0 11px; }
.bigbtn.on { width: 76px; height: 126px; border: 2px solid #1164c4; background: linear-gradient(#c2dcf4, #a9cef0); padding-top: 13px; }
.cur { width: 24px; height: 40px; }
.bigbtn.on svg { margin-bottom: 16px; }
.g-props { width: 111px; }
.g-props .body { flex-direction: column; align-items: center; padding: 9px 5px 0 0; gap: 6px; }
.g-clip { width: 140px; }
.g-clip .bigbtn { width: 96px; margin-right: 5px; }
.g-geo { width: 240px; }
.g-geo .body { padding-left: 12px; }
.g-geo .smalls + .smalls { width: 45px; }
.g-modify { width: 413px; }
.g-modify .body { padding-left: 11px; }
.g-view { width: 112px; }
.g-view .body { padding-left: 12px; gap: 16px; }
.g-view .smalls:first-child { width: 46px; }
.g-measure { width: 98px; }
.g-measure .body { display: grid; grid-template-columns: 62px 12px; grid-auto-rows: 64px; padding: 6px 0 0 11px; align-items: center; align-content: start; }
.g-create { width: 141px; margin-right: 5px; }
.g-create .body { display: grid; grid-template-columns: 64px 52px; grid-auto-rows: 64px; padding: 6px 0 0 11px; align-content: start; }
.g-mode { width: 147px; }
.g-mode .bigbtn { width: 73px; }
.g-wall { width: 285px; }
.g-wall .bigbtn:nth-child(1) { width: 97px; }
.g-wall .bigbtn:nth-child(3) { width: 98px; }

.options { height: 46px; background: #e6f0d8; line-height: 50px; padding-left: 14px; letter-spacing: -.1px; }

/* work area */
main { height: 1744px; display: grid; grid-template-columns: 484px 3017px 339px; padding-top: 4px; }
.pane-title {
  height: 36px;
  background: #eee;
  color: #444;
  display: flex;
  align-items: center;
  justify-content: space-between;
  flex: none;
}
.pane-title .x { height: 19px; }

.properties { width: 480px; height: 1780px; display: flex; flex-direction: column; background: #eee; }
.properties .pane-title { padding: 3px 3px 0 9px; margin: 0 3px 0 0; border-bottom: 2px solid #111; height: 38px; }
.type { display: flex; align-items: center; height: 124px; margin-left: 5px; border-bottom: 2px solid #ddd; padding-left: 5px; padding-right: 7px; flex: none; color: #444; }
.thumb { width: 114px; height: 114px; border: 2px solid #ccc; background: #fff; padding: 2px; }
.type-name { line-height: 28px; margin-left: 8px; flex: 1; padding-top: 3px; }
.ptabs { display: flex; gap: 4px; padding-left: 3px; height: 40px; background: #e1e1e1; width: 483px; flex: none; }
.ptabs span { width: 117px; background: #cacaca; display: flex; align-items: center; justify-content: center; padding-left: 6px; }
.ptabs .sel { background: #f0f0f0; padding: 0 13px 0 0; }
.ptabs .sel + span { padding: 0 17px 0 0; }
.filter {
  height: 38px;
  margin: 1px 1px 1px 4px;
  background: #e1e1e1;
  border: 1px solid #aaa;
  display: flex;
  justify-content: space-between;
  align-items: center;
  padding: 2px 8px 0 4px;
  flex: none;
}
.filter .chev path { stroke-width: 1.4; }
.grid { height: 1233px; border-left: 2px solid #777; background: #fff; overflow: hidden; width: 480px; flex: none; }
.pgroup { padding-bottom: 3px; }
.phead {
  height: 40px;
  background: #dcdcdc;
  font-weight: 700;
  font-size: 19px;
  letter-spacing: 0;
  display: flex;
  justify-content: space-between;
  padding: 4px 8px 0 2px;
  line-height: 36px;
}
.phead svg { width: 7px; height: 9px; margin-top: 3px; }
.phead path { fill: none; stroke: #111; stroke-width: 1.4; }
.prow { display: grid; grid-template-columns: 290px 188px; height: 36px; line-height: 34px; border-bottom: 1px dotted #444; }
.phead + .prow { height: 35px; }
.prow > :first-child { padding-left: 2px; }
.pval { border-left: 1px dotted #444; border-right: 1px dotted #444; padding-left: 3px; padding-right: 19px; }
.pval span { display: block; overflow: hidden; white-space: nowrap; height: 34px; }
.pval.focus { border-left: 2px solid #000; padding-left: 0; }
.pval.focus span { border-top: 1px solid #000; border-bottom: 1px solid #000; height: 35px; padding-left: 2px; line-height: 32px; }
.dim-row { color: #777; }
.check { width: 23px; height: 23px; margin-top: 4px; border: 1.5px solid #333; background: #fff; }
.check path { fill: none; stroke: #222; stroke-width: 1.8; }
.phase { height: 27px; margin: 0 3px 0 4px; padding-left: 2px; background: #fff; display: grid; grid-template-columns: 224px 225px 1fr; line-height: 16px; flex: none; }
.phase span { border-right: 1px dotted #444; border-bottom: 1px dotted #444; padding-left: 3px; }
.phase span:first-child { padding-left: 13px; }
.blank { flex: 1; background: #fff; margin: 0 3px 0 5px; }
.help { height: 47px; margin-left: 5px; padding: 4px 5px 7px 3px; display: flex; justify-content: space-between; flex: none; }
.help a { color: #0a64d0; line-height: 33px; height: 30px; border-bottom: 1px solid #0a64d0; align-self: flex-start; }
.help button { width: 123px; height: 38px; background: #ccc; border: 1px solid #b5b5b5; color: #8a8a8a; font: inherit; margin: 0; padding: 3px 0 0; }

.view { display: flex; flex-direction: column; }
.view-tabs { height: 35px; display: flex; color: #444; }
.vtab { width: 224px; display: flex; align-items: center; gap: 13px; padding: 3px 0 0 9px; }
.vtab.front { background: #fff; font-weight: 700; font-size: 19px; color: #333; padding-left: 8px; gap: 16px; }
.vtab.front .x { margin-left: auto; margin-right: 7px; width: 19px; }
.more { margin: 5px 1px 0 auto; }
.stage { height: 1673px; display: flex; background: #fff; }
.canvas { width: 2985px; height: 1673px; overflow: hidden; }
.vscroll { width: 29px; background: #f0f0f0; display: flex; flex-direction: column; align-items: center; }
.vscroll i { width: 28px; background: #ccc; }
.stage .vscroll { margin-top: 4px; padding: 11px 0 11px; }
.stage .vscroll i { height: 29px; margin: 799px 0 auto; }
.view-bar { height: 32px; background: #f0f0f0; border: solid #fff; border-width: 0 3px 3px 4px; display: flex; align-items: center; }
.scale { width: 131px; padding-left: 39px; letter-spacing: -.3px; }
.vicons { display: flex; gap: 6.9px; }
.chev.first { margin-left: 16px; }
.hscroll { flex: 1; height: 28px; }
.hscroll i { display: block; width: 30px; height: 28px; margin-left: 1146px; background: #ccc; }
.sizer { width: 12px; height: 12px; margin: 12px 4px 0 25px; fill: #bbb; }

.browser { width: 334px; margin-left: 4px; background: #eee; display: flex; flex-direction: column; }
.browser .pane-title { padding: 3px 4px 0 9px; font-size: 19.8px; }
.tree-wrap { height: 1672px; display: flex; padding-left: 4px; }
.tree { width: 301px; background: #fff; overflow: hidden; padding-top: 2px; font-size: 19.7px; }
.trow { height: 32px; display: flex; align-items: center; margin-left: -3px; white-space: nowrap; }
.cell { width: 36px; height: 32px; flex: none; display: flex; align-items: center; justify-content: center; }
.v { background: linear-gradient(#999, #999) 18px 0 / 1px 100% no-repeat; }
.half { background: linear-gradient(#999, #999) 18px 0 / 1px 50% no-repeat; }
.stub::after { content: ""; margin-left: 43px; width: 25px; border-top: 1px dotted #888; flex: none; }
.short.stub::after { margin-left: 39px; width: 21px; }
.box { width: 17px; height: 17px; border: 1.5px solid #8a8a8a; border-radius: 1px; background: linear-gradient(#fff 50%, #dcdcdc); margin-left: 1px; flex: none; }
.box path { stroke: #2f55a8; stroke-width: 1.5; }
.box svg { width: 14px; height: 14px; }
.boxed { justify-content: flex-start; padding-left: 9px; }
.boxed::after { content: ""; width: 15px; margin-left: 1px; border-top: 1px dotted #888; flex: none; }
.txt { margin-left: 7px; padding: 5px 3px 6px; }
.ticon { width: 28px; height: 27px; margin-left: 3px; }
.ticon + .txt { margin-left: 4px; }
.picked { background: #e0e0e0; }
.browser .vscroll { padding: 12px 0 9px; width: 28px; }
.browser .vscroll i { height: 1331px; margin: 86px 0 auto; }
.tree-h { height: 30px; background: #f0f0f0; margin-left: 4px; display: flex; align-items: center; padding-left: 10px; }
.tree-h i { width: 201px; height: 28px; margin: 0 50px 0 11px; background: #ccc; }

/* model drawing */
.plane { fill: none; stroke: #222; stroke-width: 1.3; stroke-dasharray: 175.500 54.300; }
.ink { fill: none; stroke: #000; stroke-width: 1.2; }
.navy { fill: none; stroke: #243b70; stroke-width: 1.4; }
.crisp { stroke-width: 1; }
.hatch { fill: none; stroke: #3a4d80; stroke-width: 1.1; }
.axis { fill: none; stroke: #2458d0; stroke-width: 1.5; stroke-dasharray: 18 6 6 6; }
.edge { fill: none; stroke: #2a5bc4; stroke-width: 1.5; stroke-dasharray: 12 6; }
.faint { opacity: .5; }
.dim { fill: none; stroke: #86a4fa; stroke-width: 1.6; }
.dimtext { font: 20px "Liberation Sans", Arial, sans-serif; fill: #0b3cb5; }
.grip { fill: #3f6bd6; stroke: #1d3a85; stroke-width: 1.3; }
.node { fill: #55a4f2; stroke: #35507c; stroke-width: 2; fill-opacity: .85; }
.compass { font-size: 25px; font-weight: 700; fill: #e2e2e2; stroke: #9c9c9c; stroke-width: 1.2; }
.cubetext { font-size: 15px; font-weight: 700; fill: #a0a3a8; text-anchor: middle; }

/* status bar */
.status { height: 40px; display: flex; align-items: center; padding-left: 484px; }
.hint { width: 1721px; padding-top: 6px; }
.status > span:not(.hint) { width: 36px; margin-left: 8px; padding-top: 6px; letter-spacing: -.5px; }
.combo { width: 356px; height: 30px; margin: 0 9px; background: #fff; border: 1px solid #ddd; display: flex; align-items: center; color: #7d7d7d; padding: 2px 7px 0 3px; }
.combo .chev { margin-left: auto; width: 11px; }
.combo .chev path { stroke: #999; stroke-width: 1.6; }
.status > .i + .i { margin-left: 11px; }
.selicons { display: flex; align-items: center; gap: 12px; margin-left: auto; width: 347px; color: #444; }
.selicons span { margin: 6px 0 0 -8px; }
```
FILE: script.js
```js
const groups = [
  ['Construction', [['Function', 'Exterior', 'focus'], ['Automatically Embed', 'check on'], ['Curtain Panel', 'System Panel : Glazed'], ['Join Condition', 'Vertical Grid Continuous']]],
  ['Materials and Finishes', [['Structural Material', '', 'dim']]],
  ['Vertical Grid', [['Layout', 'Maximum Spacing'], ['Spacing', '1524.0'], ['Adjust for Mullion Size', 'check']]],
  ['Horizontal Grid', [['Layout', 'Fixed Distance'], ['Spacing', '2400.0'], ['Adjust for Mullion Size', 'check']]],
  ['Vertical Mullions', [['Interior Type', 'Rectangular Mullion'], ['Border 1 Type', 'Rectangular Mullion'], ['Border 2 Type', 'Rectangular Mullion']]],
  ['Horizontal Mullions', [['Interior Type', 'Rectangular Mullion'], ['Border 1 Type', 'Rectangular Mullion'], ['Border 2 Type', 'Rectangular Mullion']]],
  ['Identity Data', [['Type Image', ''], ['Keynote', ''], ['Model', ''], ['Manufacturer', ''], ['Type Comments', ''], ['URL', ''], ['Description', ''], ['Assembly Description', '', 'dim'], ['Assembly Code', '']]]
];

const collapse = '<svg viewBox="0 0 7 9"><path d="M.5 4L3.5 1L6.500 4M.5 8L3.500 5L6.500 8"/></svg>';

function value(v) {
  if (v === 'check') return '<div class="check"></div>';
  if (v === 'check on') return '<div class="check"><svg width="20" height="20"><path d="M3 10L8 14L17 6"/></svg></div>';
  return `<span>${v}</span>`;
}

document.getElementById('props').innerHTML = groups.map(([name, rows]) =>
  `<div class="pgroup"><div class="phead">${name}${collapse}</div>` +
  rows.map(([k, v, mode]) =>
    `<div class="prow${mode === 'dim' ? ' dim-row' : ''}"><div>${k}</div><div class="pval${mode === 'focus' ? ' focus' : ''}">${value(v)}</div></div>`
  ).join('') + '</div>'
).join('');

// | line, T branch, L last branch, + closed, - open, e/o the same at the end of a line
const tree = `
||T Level 2
||L Site
|- Ceiling Plans
||T Level 1
||L Level 2
|+ 3D Views
|o Elevations (Building Elevation)
|.T East
|.T North
|.T South
|.L West
T Legends
T Schedules/Quantities (all)
T Sheets (all)
- Families
|+ Analytical Links
|+ Annotation Symbols
|+ Cable Trays
|+ Ceilings
|+ Columns
|+ Conduits
|+ Curtain Panels
|+ Curtain Systems
|- Curtain Wall Mullions
||+ Circular Mullion
||+ L Corner Mullion
||+ Quad Corner Mullion
||- Rectangular Mullion
|||T 30mm Square
|||L 50 x 150mm
||+ Trapezoid Corner Mullion
||e V Corner Mullion
|+ Detail Items
|+ Division Profiles
|+ Doors
|+ Duct Systems
|+ Ducts
|+ Flex Ducts
|+ Flex Pipes
|+ Floors
|+ Furniture
|+ Generic Models
|+ Parking
|+ Pattern
|+ Pipes
|+ Piping Systems
|+ Planting
|+ Profiles
|+ Railings
|+ Ramps
|+ Roofs
|+ Stairs`.trim().split('\n');

const icons = {
  'Legends': '<path class="l" d="M1 1H27V26H1Z"/><path d="M1 1H27V6H1ZM4 10H10V14H4ZM4 18H10V22H4Z" fill="#5b6472"/><path class="d" d="M13 10H24M13 14H20M13 18H24M13 22H22"/>',
  'Schedules/Quantities (all)': '<path class="l" d="M1 3H27V24H1Z"/><path d="M1 3H27V8H1Z" fill="#5b6472"/><path class="d" stroke-opacity=".6" d="M1 13H27M1 18H27M10 8V24M19 8V24"/>',
  'Sheets (all)': '<path class="l" d="M1 2H21L28 8V25H1Z"/><path class="d" d="M5 18V8H17V20H10M5 22H9M20 10V20"/>',
  'Families': '<path class="l" d="M1 2H12V13H1ZM16 2H27V26H1V17H16Z"/>'
};

const plus = open => `<span class="box"><svg viewBox="0 0 14 14"><path d="M2 7H12${open ? '' : 'M7 2V12'}"/></svg></span>`;

document.getElementById('tree').innerHTML = tree.map(line => {
  const cut = line.indexOf(' ');
  const name = line.slice(cut + 1);
  const cells = [...line.slice(0, cut)].map(c => {
    if (c === '.') return '<div class="cell"></div>';
    if (c === '|') return '<div class="cell v"></div>';
    if (c === 'T') return `<div class="cell v stub${icons[name] ? ' short' : ''}"></div>`;
    if (c === 'L') return '<div class="cell half stub"></div>';
    return `<div class="cell ${c === 'e' || c === 'o' ? 'half' : 'v'} boxed">${plus(c === '-' || c === 'o')}</div>`;
  }).join('');
  const icon = icons[name] ? `<svg class="ticon">${icons[name]}</svg>` : '';
  return `<div class="trow">${cells}${icon}<span class="txt${name === '30mm Square' ? ' picked' : ''}">${name}</span></div>`;
}).join('');
```
